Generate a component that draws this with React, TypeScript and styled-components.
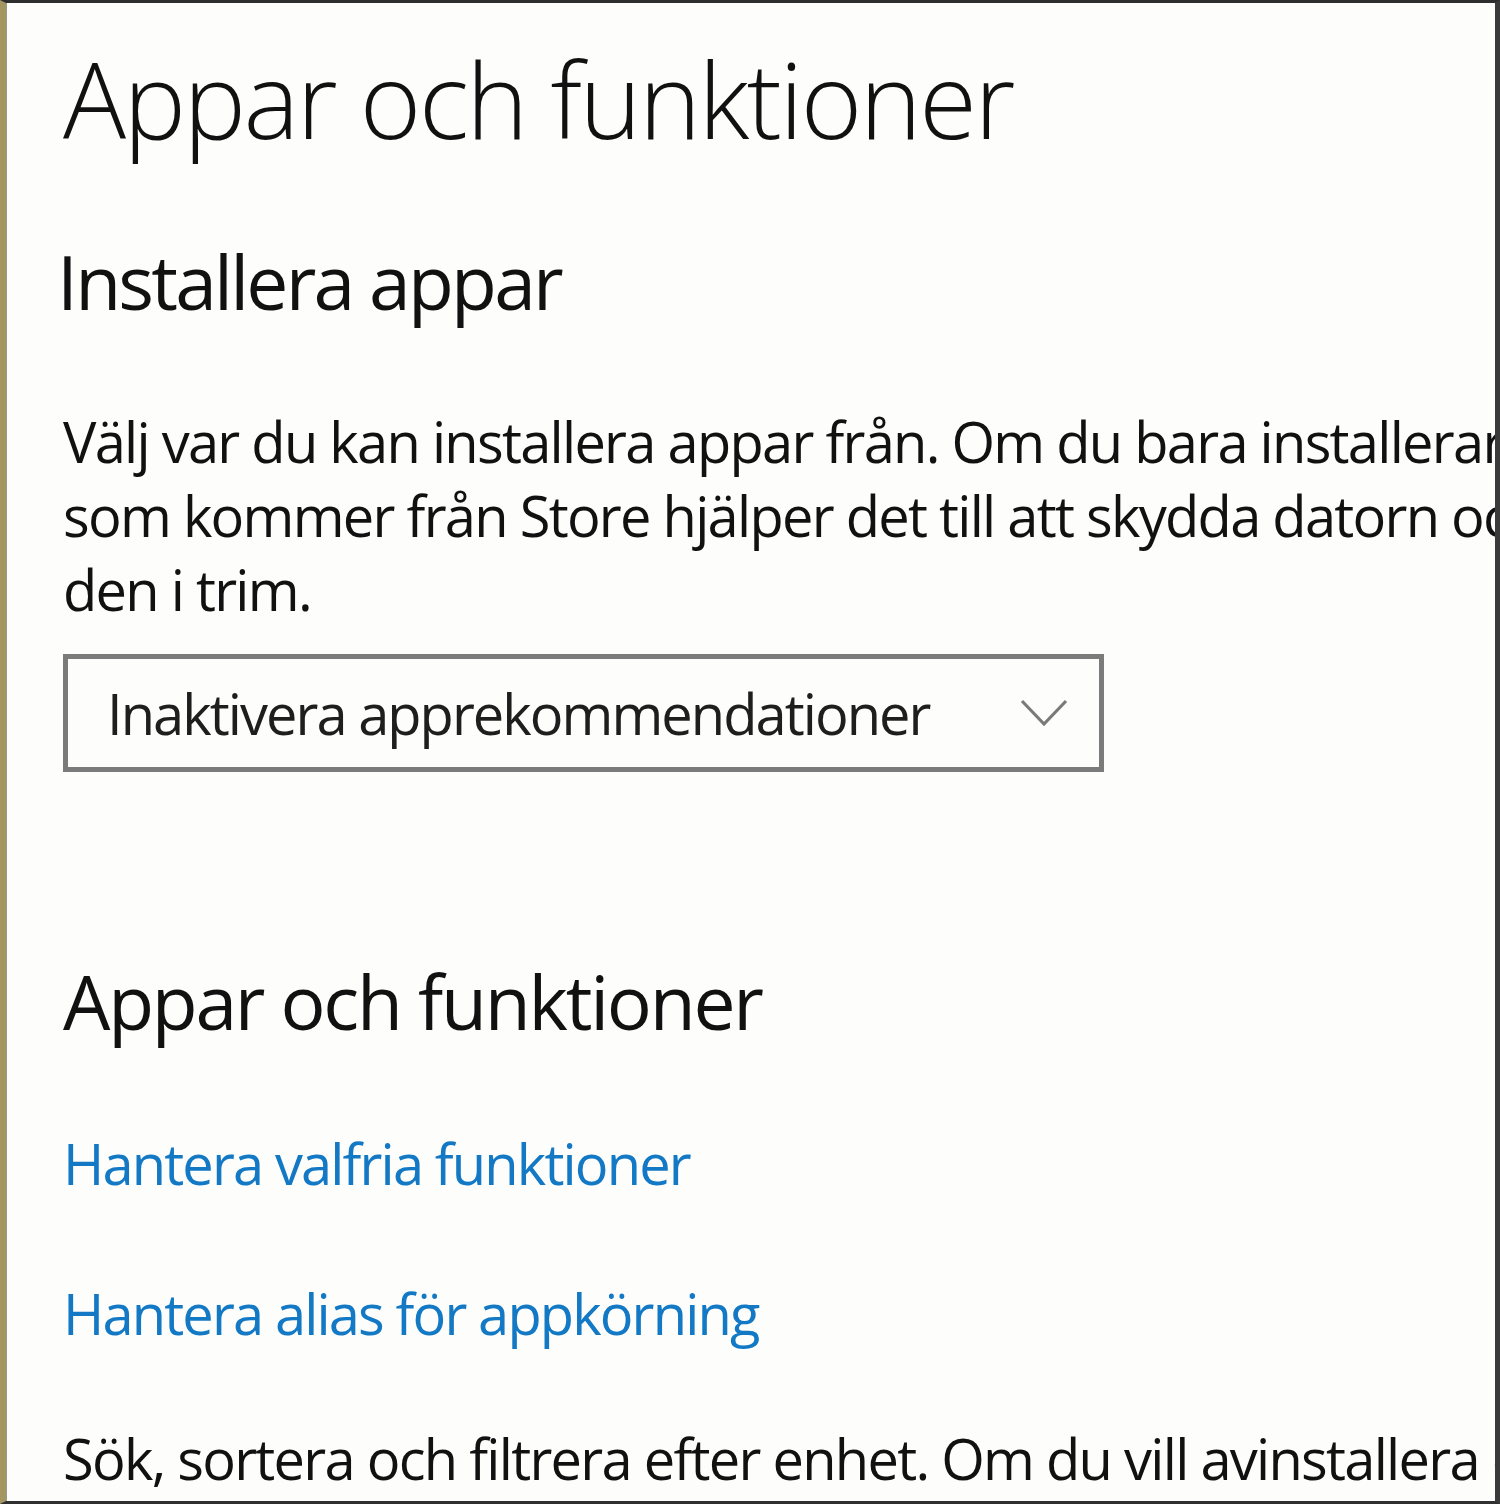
import React from "react";
import styled, { createGlobalStyle } from "styled-components";

const Global = createGlobalStyle`
  html, body { margin: 0; padding: 0; background: #fdfdfc; }
  #root { width: 1500px; height: 1504px; }
`;

const Window = styled.div`
  box-sizing: border-box;
  width: 1500px;
  height: 1504px;
  overflow: hidden;
  background: #fdfdfc;
  border-top: 3px solid #2e2e2e;
  border-right: 5px solid #3a3a3a;
  border-bottom: 3px solid #303030;
  border-left: 6px solid #a39660;
  box-shadow: inset 1px 0 0 #9a9a94;
  padding: 36px 0 0 57px;
  font-family: "Open Sans", "Noto Sans", sans-serif;
  color: #111;
`;

const Title = styled.h1`
  margin: 0;
  font-size: 105px;
  line-height: 120px;
  font-weight: 300;
  letter-spacing: -2.5px;
  white-space: nowrap;
`;

const SectionTitle = styled.h2<{ $top: number; $shift?: number; $track: number }>`
  margin: ${(p) => p.$top}px 0 0 ${(p) => p.$shift ?? 0}px;
  font-size: 75px;
  line-height: 90px;
  font-weight: 400;
  letter-spacing: ${(p) => p.$track}px;
  white-space: nowrap;
`;

const Body = styled.p<{ $top: number }>`
  margin: ${(p) => p.$top}px 0 0;
  font-size: 56px;
  line-height: 74px;
  letter-spacing: -1.72px;
  white-space: nowrap;
`;

const Link = styled.a<{ $top: number }>`
  display: block;
  margin-top: ${(p) => p.$top}px;
  font-size: 56px;
  line-height: 74px;
  letter-spacing: -1.85px;
  color: #1379c5;
  text-decoration: none;
  white-space: nowrap;
`;

const Select = styled.div`
  box-sizing: border-box;
  margin-top: 28px;
  width: 1041px;
  height: 118px;
  border: 5px solid #7b7b7b;
  display: flex;
  align-items: center;
  justify-content: space-between;
  padding: 0 31px 0 39px;
`;

const SelectText = styled.span`
  font-size: 56px;
  line-height: 74px;
  letter-spacing: -1.95px;
  color: #1e1e1e;
  white-space: nowrap;
`;

const Chevron = () => (
  <svg width="48" height="30" viewBox="0 0 48 30" aria-hidden>
    <polyline points="2,3 24,26 46,3" fill="none" stroke="#7a7a7a" strokeWidth="3.2" />
  </svg>
);

export default function App() {
  return (
    <>
      <Global />
      <Window>
        <Title>Appar och funktioner</Title>
        <SectionTitle $top={77} $shift={-6} $track={-2.8}>Installera appar</SectionTitle>
        <Body $top={78}>
          Välj var du kan installera appar från. Om du bara installerar appar
          <br />
          som kommer från Store hjälper det till att skydda datorn och hålla
          <br />
          den i trim.
        </Body>
        <Select>
          <SelectText>Inaktivera apprekommendationer</SelectText>
          <Chevron />
        </Select>
        <SectionTitle $top={184} $track={-2.25}>Appar och funktioner</SectionTitle>
        <Link href="#" $top={80}>Hantera valfria funktioner</Link>
        <Link href="#" $top={76}>Hantera alias för appkörning</Link>
        <Body $top={71}>
          Sök, sortera och filtrera efter enhet. Om du vill avinstallera eller flytta en app väljer du den i listan.
        </Body>
      </Window>
    </>
  );
}
